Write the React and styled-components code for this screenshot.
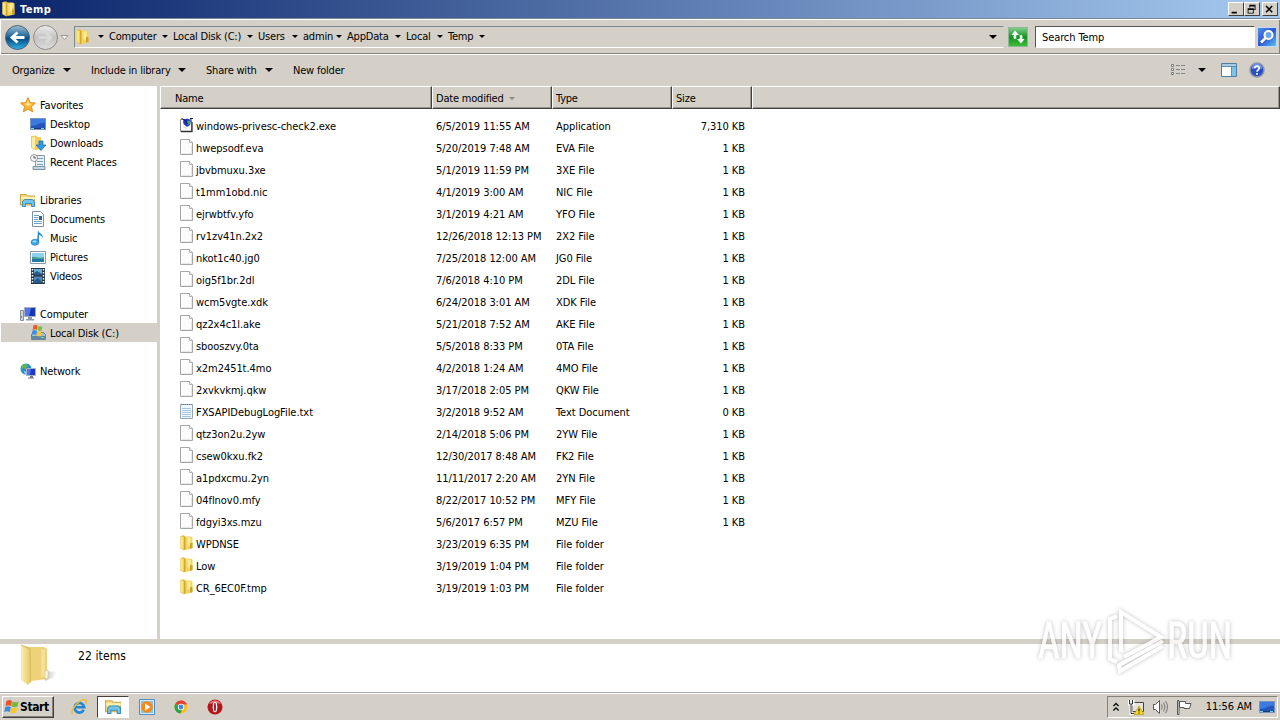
import styled, { createGlobalStyle } from 'styled-components'

const files = [
  ['exe', 'windows-privesc-check2.exe', '6/5/2019 11:55 AM', 'Application', '7,310 KB'],
  ['file', 'hwepsodf.eva', '5/20/2019 7:48 AM', 'EVA File', '1 KB'],
  ['file', 'jbvbmuxu.3xe', '5/1/2019 11:59 PM', '3XE File', '1 KB'],
  ['file', 't1mm1obd.nic', '4/1/2019 3:00 AM', 'NIC File', '1 KB'],
  ['file', 'ejrwbtfv.yfo', '3/1/2019 4:21 AM', 'YFO File', '1 KB'],
  ['file', 'rv1zv41n.2x2', '12/26/2018 12:13 PM', '2X2 File', '1 KB'],
  ['file', 'nkot1c40.jg0', '7/25/2018 12:00 AM', 'JG0 File', '1 KB'],
  ['file', 'oig5f1br.2dl', '7/6/2018 4:10 PM', '2DL File', '1 KB'],
  ['file', 'wcm5vgte.xdk', '6/24/2018 3:01 AM', 'XDK File', '1 KB'],
  ['file', 'qz2x4c1l.ake', '5/21/2018 7:52 AM', 'AKE File', '1 KB'],
  ['file', 'sbooszvy.0ta', '5/5/2018 8:33 PM', '0TA File', '1 KB'],
  ['file', 'x2m2451t.4mo', '4/2/2018 1:24 AM', '4MO File', '1 KB'],
  ['file', '2xvkvkmj.qkw', '3/17/2018 2:05 PM', 'QKW File', '1 KB'],
  ['txt', 'FXSAPIDebugLogFile.txt', '3/2/2018 9:52 AM', 'Text Document', '0 KB'],
  ['file', 'qtz3on2u.2yw', '2/14/2018 5:06 PM', '2YW File', '1 KB'],
  ['file', 'csew0kxu.fk2', '12/30/2017 8:48 AM', 'FK2 File', '1 KB'],
  ['file', 'a1pdxcmu.2yn', '11/11/2017 2:20 AM', '2YN File', '1 KB'],
  ['file', '04flnov0.mfy', '8/22/2017 10:52 PM', 'MFY File', '1 KB'],
  ['file', 'fdgyi3xs.mzu', '5/6/2017 6:57 PM', 'MZU File', '1 KB'],
  ['folder', 'WPDNSE', '3/23/2019 6:35 PM', 'File folder', ''],
  ['folder', 'Low', '3/19/2019 1:04 PM', 'File folder', ''],
  ['folder', 'CR_6EC0F.tmp', '3/19/2019 1:03 PM', 'File folder', ''],
]

const groups = [
  ['star', 'Favorites', [['desktop', 'Desktop'], ['downloads', 'Downloads'], ['recent', 'Recent Places']]],
  ['library', 'Libraries', [['document', 'Documents'], ['music', 'Music'], ['picture', 'Pictures'], ['video', 'Videos']]],
  ['computer', 'Computer', [['disk', 'Local Disk (C:)']]],
  ['network', 'Network', []],
]

// name and the width its segment takes up to the next one
const crumbs = [
  ['Computer', 64],
  ['Local Disk (C:)', 85],
  ['Users', 45],
  ['admin', 44],
  ['AppData', 59],
  ['Local', 42],
  ['Temp', 42],
]

const icons = {
  folder: (
    <>
      <path d="M1.500 1 5 .3 7 2v12l-1.500 1.500-4-2z" fill="#e3bd3c" />
      <path d="M6 1.500h6l1.500 1v11l-7 1.500z" fill="#f0d565" />
      <path d="M1.500 1.500 4.500 2v12l-3-1z" fill="#f8e57e" />
      <path d="M8.500 2.500h3v8h-3z" fill="#faec96" />
      <path d="M11 8h2.500v5l-2.500.7z" fill="#cfa22e" />
      <path d="M5.800 2v12.500" stroke="#caa02e" />
    </>
  ),
  file: (
    <>
      <path d="M1.500.5h9l3 3v12h-12z" fill="#fcfcfc" stroke="#a6a6a6" />
      <path d="M10.500.5v3h3" fill="#eee" stroke="#b4b4b4" />
      <path d="M3 14.500h9.500V6" fill="none" stroke="#e8e8e8" />
    </>
  ),
  txt: (
    <>
      <path d="M1.500 1.500h12v14h-12z" fill="#eef7fd" stroke="#95a4b0" />
      <path d="M3 5.500h9M3 7.500h9M3 9.500h9M3 11.500h9M3 13.500h9" stroke="#a7c8e0" />
      <path d="M2 1.500h11" stroke="#777" strokeDasharray="1 1" />
    </>
  ),
  exe: (
    <>
      <path d="M1.500 2.500h11v12h-11z" fill="#fff" stroke="#8a8a8a" />
      <path d="M2 14.500h11V5" fill="none" stroke="#333" strokeWidth="1.300" />
      <path d="M4 3.500l4-2 4 2-1 4.500-3 2-3.500-3z" fill="#1b35c9" />
      <path d="M8 4l3-.5v3l-2.500 2z" fill="#46a845" />
      <path d="M2.500 1.500l3.500 1.500 2.500 4M11 1.500h3" stroke="#0a1470" fill="none" />
      <path d="M4 9.500l4 2" stroke="#cfd4f2" />
    </>
  ),
  star: (
    <>
      <path d="M8 .7l2.100 4.900 5.300.5-4 3.500 1.200 5.200L8 12.100l-4.600 2.700 1.200-5.200-4-3.500 5.300-.5z" fill="#fbb734" stroke="#e58a20" />
      <path d="M8 3l1.300 3.500 3.200.3L8 9l-4-2.200 2.700-.3z" fill="#ffe58a" />
    </>
  ),
  desktop: (
    <>
      <path d="M.5 2.500h15v11H.5z" fill="#2455b8" stroke="#7892b8" />
      <path d="M1 3h14v4C10 6 7 10 1 10z" fill="#3b7ae0" />
      <path d="M1 12.500h14" stroke="#193b75" />
      <path d="M1 12.500h3M11 12.500h3" stroke="#79cdf0" />
    </>
  ),
  downloads: (
    <>
      <path d="M1 1l5-.5L8 2h3v12l-6 1-4-2z" fill="#edcf69" />
      <path d="M2 2l3 .5v11L2 13z" fill="#fcee9c" />
      <path d="M9 6h4v4h3l-5 5.500L6 10h3z" fill="#2f9be2" stroke="#1464a6" strokeWidth=".7" />
    </>
  ),
  recent: (
    <>
      <path d="M5.500 1.500h9v11h-9z" fill="#e6eef4" stroke="#8799aa" />
      <path d="M7 4.500h6M7 7.500h6M7 10.500h6" stroke="#7aa6c6" />
      <path d="M3 12.500h12v3H3z" fill="#c5d6e2" stroke="#7e95a5" />
      <circle cx="4" cy="4" r="3.500" fill="#f4f4f4" stroke="#999" />
      <path d="M4 2v2h2" stroke="#555" fill="none" />
    </>
  ),
  library: (
    <>
      <path d="M.5 2.500h6l1 1.500h7v9H.5z" fill="#f6dd78" stroke="#c9a648" />
      <path d="M1 5h14v2H1z" fill="#fff3b6" />
      <path d="M2.500 14.500v-5l2-2h8l2 2v5h-3v-3h-6v3z" fill="#72c4ec" stroke="#3c8dbd" />
    </>
  ),
  document: (
    <>
      <path d="M2.500.5h8l3 3v12h-11z" fill="#fff" stroke="#7d90a6" />
      <path d="M4 4.500h5M4 6.500h4M4 8.500h4M4 10.500h8M4 12.500h8" stroke="#6ba2cf" />
      <path d="M9 5h3v4H9z" fill="#325f97" />
    </>
  ),
  music: (
    <>
      <path d="M8 0c1 4 5 3 5 8-1-2-3-3-4-3v7H7z" fill="#2c8ed3" />
      <ellipse cx="5" cy="12.300" rx="4" ry="3" fill="#3ba6e6" stroke="#1d6fb4" strokeWidth=".6" />
      <ellipse cx="4.500" cy="11.500" rx="2" ry="1" fill="#9fdcfa" />
    </>
  ),
  picture: (
    <>
      <path d="M.5 2.500h15v12H.5z" fill="#fff" stroke="#8b98a4" />
      <path d="M2 4h12v9H2z" fill="#8ed0ef" />
      <path d="M2 8c4-1 6 2 12 0v2H2z" fill="#44a28c" />
      <path d="M2 10h12v3H2z" fill="#2478a8" />
    </>
  ),
  video: (
    <>
      <path d="M1 0h14v16H1z" fill="#263746" />
      <path d="M4 1h8v6H4z" fill="#6cabd4" />
      <path d="M4 8.500h8V15H4z" fill="#4d88bf" />
      <path d="M4 5l3-2 5 3v1H4zM4 13l4-3 4 4v1H4z" fill="#275b8c" />
      <path d="M2.500 1v14M13.500 1v14" stroke="#fff" strokeWidth="1.500" strokeDasharray="1.500 1.500" />
    </>
  ),
  computer: (
    <>
      <path d="M.5 4.500h3v10h-3z" fill="#c9d3d9" stroke="#87939b" />
      <path d="M1.500 10v2" stroke="#54b948" />
      <path d="M4.500 1.500h11v9h-11z" fill="#1c35b4" stroke="#a6afbd" />
      <path d="M5 2h6l-2 8H5z" fill="#5375e6" />
      <path d="M8 11h4v2h2v1.500H6V13h2z" fill="#8e9aab" />
    </>
  ),
  disk: (
    <>
      <path d="M1.500 9.500l2-2h10l2 2v5h-14z" fill="#a4c0cf" stroke="#688494" />
      <path d="M2 11h13v3H2z" fill="#5b8ba6" />
      <path d="M11 12.500h3" stroke="#7fe066" />
      <path d="M3.500.5c1.500-1 3-1 4 0L7 5c-1.500-1-3-1-4.500 0z" fill="#ea5a2b" />
      <path d="M8.300 1c1.500.8 3 .8 4.200 0L11.700 5.500c-1.200.6-2.500.6-4 0z" fill="#7fbe3e" />
      <path d="M2.300 5.700c1.500-1 3-1 4.500 0L6.200 10c-1.500-1-3-1-4.500 0z" fill="#3f8fe0" />
      <path d="M7.500 6.200c1.500.8 3 .8 4 0L10.800 11c-1.300.5-2.500.3-4-.3z" fill="#fbc62f" />
    </>
  ),
  network: (
    <>
      <circle cx="6" cy="6" r="5.500" fill="#2d8fc9" />
      <path d="M2 2c3-2 5-1 6 1L5 6 3 5 1 7z" fill="#58b65d" />
      <path d="M4 8l3 1v2.500C5 11 4 10 4 8z" fill="#8fdde2" />
      <path d="M6.500 5.500h9v7h-9z" fill="#1e38c0" stroke="#a6b4c9" />
      <path d="M7 6h4l-1 6H7z" fill="#5173ec" />
      <path d="M10 13h3v1.500h1v1H8v-1h2z" fill="#778" />
    </>
  ),
  windows: (
    <>
      <path d="M2.500 2C5 .5 6.500.8 8 2L7 7C5 6 4 6 1.500 7z" fill="#e8532a" />
      <path d="M8.700 2.500c2 1 4 1 6 0L13.500 7.500c-2 1-4 1-6 0z" fill="#7ab83c" />
      <path d="M1.300 8c2-1.200 4-1 5.500 0L5.800 13c-2-1.200-3.500-1-5.500 0z" fill="#3c8bdc" />
      <path d="M7.300 8.500c2 1 4 1 6 0l-1 5c-2 1-4 1-6 0z" fill="#fbc52c" />
    </>
  ),
  ie: (
    <>
      <path d="M12.800 10.800A4.800 4.800 0 1 1 13.200 8.300H4" fill="none" stroke="#2386d2" strokeWidth="2.600" />
      <path d="M1.500 15C-1 12 8-.5 14.500 1c1.300.6.8 2.500.3 3.800" fill="none" stroke="#eebc35" strokeWidth="1.500" />
    </>
  ),
  player: (
    <>
      <path d="M.5.5h15v15H.5z" fill="#d8eaf7" stroke="#4e8fc4" />
      <path d="M2 2h12v12H2z" fill="#8dbfe3" />
      <circle cx="8" cy="8" r="5.800" fill="#f58a1b" />
      <path d="M6 4.500l5.500 3.500L6 11.500z" fill="#fff" />
    </>
  ),
  chrome: (
    <>
      <circle cx="8" cy="8" r="6.500" fill="#fbc116" />
      <path d="M8 8 2.300 4.800A6.500 6.500 0 0 1 14 5.500H8z" fill="#e34133" />
      <path d="M8 8 2.300 4.800A6.500 6.500 0 0 0 7.300 14.500L10 9.500z" fill="#2da14c" />
      <circle cx="8" cy="8" r="3.200" fill="#fff" />
      <circle cx="8" cy="8" r="2.400" fill="#4483e8" />
    </>
  ),
  opera: (
    <>
      <circle cx="8" cy="8" r="7.500" fill="#b7151b" />
      <path d="M2 5C4 0 12 0 14 5c-3-1-8-1-12 0z" fill="#e1696b" />
      <ellipse cx="8" cy="8" rx="2.300" ry="5.300" fill="#fff" />
      <ellipse cx="8" cy="8" rx=".9" ry="4.500" fill="#8c0d12" />
    </>
  ),
  help: (
    <>
      <circle cx="8" cy="8" r="7" fill="#2a4fc0" stroke="#8d97aa" strokeWidth="1.500" />
      <path d="M2.500 7a5.500 5.500 0 0 1 11 0c-4-1-7-1-11 0z" fill="#6f8fe4" />
      <path d="M5.700 6.300c0-3 4.700-2.800 4.500 0C10.200 8 8 7.800 8 9.800M8 11v1.700" fill="none" stroke="#fff" strokeWidth="1.700" />
    </>
  ),
  views: (
    <>
      <path d="M1.500 2.500h2v2h-2zM1.500 6.500h2v2h-2zM1.500 10.500h2v2h-2z" fill="#fff" stroke="#777d85" />
      <path d="M6 3.500h4M11 3.500h4M6 7.500h4M11 7.500h4M6 11.500h4M11 11.500h4" stroke="#7d8790" />
    </>
  ),
  preview: (
    <>
      <path d="M.5 1.500h15v13H.5z" fill="#fff" stroke="#4e7ea3" />
      <path d="M1 2h14v2H1z" fill="#a8cce4" />
      <path d="M11 4h4v10h-4z" fill="#7cc4e4" />
      <path d="M10.500 4v10M1 4.500h14" stroke="#5a90b4" />
    </>
  ),
  refresh: (
    <path d="M4 10Q3 7.500 4 6H1.500L5 1.500 9 6H6.500Q5.800 8 6.500 9.500zM12 6q1 2.500 0 4h2.500L11 14.500 7 10h2.500q.7-2 0-3.500z" fill="#fff" />
  ),
  search: (
    <>
      <circle cx="9.500" cy="6" r="4" fill="#6aa4ee" stroke="#fff" strokeWidth="2" />
      <path d="M6.500 9L2 13.500" stroke="#fff" strokeWidth="2.500" />
    </>
  ),
  minimize: <path d="M3 10h6v2H3z" />,
  restore: <path d="M5 2h7v6h-2v-1h1V4H6v1H5zM3 6h7v6H3zM4 8v3h5V8z" fillRule="evenodd" />,
  close: <path d="M3.500 3.500l7 7M10.500 3.500l-7 7" stroke="#000" strokeWidth="1.800" />,
  chevrons: <path d="M5 7l3-3 3 3M5 12l3-3 3 3" fill="none" stroke="#000" strokeWidth="1.500" />,
  lan: (
    <>
      <path d="M4.500 3.500h11v9h-11z" fill="#e6e4da" stroke="#444" />
      <path d="M1 1v4h4V1M3 5v10h3" fill="none" stroke="#fff" strokeWidth="3" />
      <path d="M1.500 1v4h3V1M3 5v9.500h3" fill="none" stroke="#333" />
      <path d="M11 7l5 8.500H6z" fill="#fbdc1c" stroke="#a68a12" strokeWidth=".6" />
      <path d="M11 9.500v3M11 13.500v1" stroke="#222" strokeWidth="1.300" />
    </>
  ),
  sound: (
    <>
      <path d="M1.500 5.500h2l4-4v13l-4-4h-2z" fill="#fff" stroke="#555" />
      <path d="M9.500 5.500q1.500 2.500 0 5M11.500 3.500q3 4.500 0 9M13.500 2q4 6 0 12" fill="none" stroke="#777" />
    </>
  ),
  flag: (
    <>
      <path d="M1.500 1.500h1.500v14H1.500z" fill="#fff" stroke="#555" />
      <path d="M3.500 2.500h6v2h5.500l-1.500 5H8v-1H3.500z" fill="#fff" stroke="#555" />
    </>
  ),
}

function Icon({ name, size = 16 }) {
  return (
    <Glyph width={size} height={size} viewBox="0 0 16 16">
      {icons[name]}
    </Glyph>
  )
}

export default function App() {
  return (
    <Window>
      <GlobalStyle />
      <TitleBar>
        <Icon name="folder" />
        <Title>Temp</Title>
        <CaptionButton><Icon name="minimize" size={14} /></CaptionButton>
        <CaptionButton $gap><Icon name="restore" size={14} /></CaptionButton>
        <CaptionButton><Icon name="close" size={14} /></CaptionButton>
      </TitleBar>
      <NavBar>
        <NavButtons />
        <AddressBar>
          <Icon name="folder" />
          <Crumbs>
            <Arrow />
            {crumbs.map(([name, width]) => (
              <Crumb key={name} $width={width}>
                {name}
                <Arrow />
              </Crumb>
            ))}
          </Crumbs>
          <Arrow $size={4} />
        </AddressBar>
        <Refresh><Icon name="refresh" /></Refresh>
        <SearchBox>Search Temp</SearchBox>
        <SearchButton><Icon name="search" /></SearchButton>
      </NavBar>
      <Toolbar>
        <Command $width={79}>Organize <Arrow $size={4} /></Command>
        <Command $width={115}>Include in library <Arrow $size={4} /></Command>
        <Command $width={87}>Share with <Arrow $size={4} /></Command>
        <Command>New folder</Command>
        <ToolIcons>
          <ViewMenu>
            <Icon name="views" />
            <Arrow $size={4} />
          </ViewMenu>
          <Icon name="preview" />
          <Icon name="help" />
        </ToolIcons>
      </Toolbar>
      <Body>
        <Sidebar>
          {groups.map(([icon, label, items]) => (
            <Group key={label}>
              <TreeItem><Icon name={icon} />{label}</TreeItem>
              {items.map(([itemIcon, item]) => (
                <TreeItem key={item} $child $selected={itemIcon === 'disk'}>
                  <Icon name={itemIcon} />
                  {item}
                </TreeItem>
              ))}
            </Group>
          ))}
        </Sidebar>
        <Content>
          <HeaderRow>
            <HeaderCell $pad={14}>Name</HeaderCell>
            <HeaderCell>Date modified <Arrow $color="#8c8880" /></HeaderCell>
            <HeaderCell>Type</HeaderCell>
            <HeaderCell>Size</HeaderCell>
            <HeaderCell />
          </HeaderRow>
          <List>
            {files.map(([icon, name, date, type, size]) => (
              <FileRow key={name}>
                <NameCell><Icon name={icon} />{name}</NameCell>
                <Cell>{date}</Cell>
                <Cell>{type}</Cell>
                <SizeCell>{size}</SizeCell>
              </FileRow>
            ))}
          </List>
        </Content>
      </Body>
      <Details>
        <BigFolder />
        <span>22 items</span>
      </Details>
      <Taskbar>
        <StartButton><Icon name="windows" />Start</StartButton>
        <Task><Icon name="ie" /></Task>
        <Task $active><Icon name="library" size={17} /></Task>
        <Task><Icon name="player" /></Task>
        <Task><Icon name="chrome" /></Task>
        <Task><Icon name="opera" /></Task>
        <Tray>
          <Icon name="chevrons" size={14} />
          <Icon name="lan" />
          <Icon name="sound" />
          <Icon name="flag" />
          <Clock>11:56 AM</Clock>
          <Icon name="desktop" />
        </Tray>
      </Taskbar>
      <Watermark />
    </Window>
  )
}

function NavButtons() {
  return (
    <Glyph width="72" height="32" viewBox="2 0 72 32">
      <defs>
        <linearGradient id="back" x2="0" y2="1">
          <stop stopColor="#a3bfd2" />
          <stop offset=".45" stopColor="#20689c" />
          <stop offset=".55" stopColor="#0a4c83" />
          <stop offset="1" stopColor="#2fb4e6" />
        </linearGradient>
        <linearGradient id="forward" x2="0" y2="1">
          <stop stopColor="#eeeeec" />
          <stop offset=".5" stopColor="#c3c2c0" />
          <stop offset="1" stopColor="#dededc" />
        </linearGradient>
      </defs>
      <circle cx="17.500" cy="16.500" r="12" fill="url(#back)" stroke="#4e6578" />
      <path d="M24.500 16.500H12M17.500 11.500l-5.500 5 5.500 5" fill="none" stroke="#fff" strokeWidth="2.800" />
      <circle cx="45.500" cy="16.500" r="12" fill="url(#forward)" stroke="#8c8c8c" />
      <path d="M38.500 16.500h12.500M45.500 11.500l5.500 5-5.500 5" fill="none" stroke="#d9d9d7" strokeWidth="2.500" />
      <path d="M61 14.500h7l-3.500 4z" fill="#fff" stroke="#999" />
    </Glyph>
  )
}

function BigFolder() {
  return (
    <Glyph width="40" height="44" viewBox="0 0 40 44">
      <defs>
        <linearGradient id="flap">
          <stop stopColor="#fbeeb0" />
          <stop offset="1" stopColor="#e5c766" />
        </linearGradient>
        <linearGradient id="shade">
          <stop stopColor="#c4c4c4" />
          <stop offset="1" stopColor="#fff" />
        </linearGradient>
      </defs>
      <path d="M25 27l12 1-3 5-9 4z" fill="url(#shade)" />
      <path d="M10 3h14l3 2v30l-16 2z" fill="#edd27a" />
      <path d="M21 5h4v28h-4z" fill="#f4e09a" />
      <path d="M1 1l9 2 1 3v32l-3 3-7-5z" fill="url(#flap)" />
      <path d="M1 1l9 4 .5 33" fill="none" stroke="#d8b95c" />
      <path d="M25 27l3-1v8l-3 1z" fill="#fff8dc" stroke="#c9b77c" strokeWidth=".5" />
    </Glyph>
  )
}

function Watermark() {
  return (
    <Mark width="246" height="72" viewBox="0 0 246 72">
      <g fill="#fff" stroke="#fff" strokeWidth=".8" fontFamily="Roboto, sans-serif" fontSize="50">
        <text x="6" y="54" textLength="64" lengthAdjust="spacingAndGlyphs">ANY</text>
        <text x="135" y="54" textLength="65" lengthAdjust="spacingAndGlyphs">RUN</text>
      </g>
      <g fill="none" stroke="#fff" strokeWidth="4">
        <path d="M85 12l-7 3v40l7 3" />
        <path d="M89 48V8l40 25-37 20" />
        <path d="M131 37L87 61l1 6 43-25" />
      </g>
    </Mark>
  )
}

const GlobalStyle = createGlobalStyle`
  body {
    margin: 0;
    overflow: hidden;
  }
`

const Window = styled.main`
  position: relative;
  display: flex;
  flex-direction: column;
  width: 1280px;
  height: 720px;
  background: #d4d0c8;
  color: #000;
  font: 11px 'DejaVu Sans Condensed', 'DejaVu Sans', sans-serif;
  font-stretch: condensed;
  letter-spacing: -0.2px;
  white-space: nowrap;
`

const Glyph = styled.svg`
  display: block;
  flex: none;
`

const Arrow = styled.i`
  display: inline-block;
  flex: none;
  border: ${({ $size = 3 }) => $size}px solid transparent;
  border-top-color: ${({ $color = '#000' }) => $color};
  border-bottom: 0;
`

const TitleBar = styled.header`
  display: flex;
  align-items: center;
  box-sizing: border-box;
  height: 18px;
  padding: 0 2px 0 1px;
  background: linear-gradient(90deg, #0a246a, #a6caf0);
`

const Title = styled.h1`
  flex: 1;
  margin: 0 0 0 3px;
  color: #fff;
  font-size: 11px;
  letter-spacing: 0.5px;
`

const CaptionButton = styled.button`
  display: grid;
  place-items: center;
  box-sizing: border-box;
  width: 16px;
  height: 14px;
  margin-right: ${({ $gap }) => ($gap ? 2 : 0)}px;
  padding: 0;
  border: 1px solid;
  border-color: #fff #404040 #404040 #fff;
  background: #d4d0c8;
`

const NavBar = styled.nav`
  display: flex;
  align-items: center;
  box-sizing: border-box;
  height: 37px;
  padding: 2px 3px 1px 2px;
  border-top: 1px solid #7d8791;
  border-bottom: 1px solid #fff;
  box-shadow: inset 1px 1px #fff, inset -1px -1px #858178;
`

const AddressBar = styled.div`
  display: flex;
  align-items: center;
  box-sizing: border-box;
  width: 930px;
  height: 22px;
  padding-right: 6px;
  border: 1px solid;
  border-color: #7b8a8e #d4d0c8 #fff #7b8a8e;
`

const Crumbs = styled.div`
  display: flex;
  flex: 1;
  align-items: center;
  padding: 0 0 2px 7px;
`

const Crumb = styled.span`
  display: flex;
  justify-content: space-between;
  align-items: center;
  box-sizing: border-box;
  width: ${({ $width }) => $width}px;
  padding-left: 5px;
`

const Refresh = styled.button`
  display: grid;
  place-items: center;
  box-sizing: border-box;
  flex: none;
  width: 20px;
  height: 20px;
  margin-left: 4px;
  padding: 0;
  border: 1px solid #8fb894;
  background: linear-gradient(#7fce86, #149226 50%, #3cbd35);
`

const SearchBox = styled.div`
  display: flex;
  align-items: center;
  box-sizing: border-box;
  flex: 1;
  height: 22px;
  margin-left: 7px;
  padding-left: 6px;
  border: 1px solid;
  border-color: #555 #fff #fff #555;
  background: #fff;
  letter-spacing: -0.1px;
`

const SearchButton = styled(Refresh)`
  margin-left: 2px;
  border-color: #c3d8f2;
  background: linear-gradient(135deg, #4b8ee8, #2f55d4 50%, #55c5f0);
`

const Toolbar = styled.div`
  display: flex;
  align-items: center;
  height: 30px;
  padding: 0 15px 1px 12px;
`

const Command = styled.span`
  display: flex;
  justify-content: space-between;
  align-items: center;
  box-sizing: border-box;
  width: ${({ $width }) => ($width ? `${$width}px` : 'auto')};
  padding-right: ${({ $width }) => ($width ? 20 : 0)}px;
`

const ToolIcons = styled.div`
  display: flex;
  flex: 1;
  justify-content: flex-end;
  align-items: center;
  gap: 12px;
`

const ViewMenu = styled.div`
  display: flex;
  align-items: center;
  gap: 12px;
  margin-right: 3px;
`

const Body = styled.section`
  display: flex;
  height: 553px;
`

const Sidebar = styled.aside`
  box-sizing: border-box;
  width: 157px;
  padding-top: 9px;
  background: #fff;
  letter-spacing: -0.15px;
`

const Group = styled.div`
  margin-bottom: 19px;
`

const TreeItem = styled.div`
  display: flex;
  align-items: center;
  gap: 4px;
  height: 18px;
  margin-left: 1px;
  padding: 1px 0 0 ${({ $child }) => ($child ? 29 : 19)}px;
  /* the selected row runs on over the splitter */
  margin-right: ${({ $selected }) => ($selected ? -3 : 0)}px;
  background: ${({ $selected }) => ($selected ? '#d4d0c8' : 'none')};
  line-height: 15px;

  svg {
    margin-bottom: 1px;
  }
`

const Content = styled.div`
  display: flex;
  flex: 1;
  flex-direction: column;
  margin-left: 3px;
`

const HeaderRow = styled.div`
  display: grid;
  grid-template-columns: 272px 120px 120px 80px 1fr;
  height: 23px;
`

const HeaderCell = styled.div`
  display: flex;
  align-items: center;
  gap: 5px;
  padding: 2px 0 0 ${({ $pad = 3 }) => $pad}px;
  border: 1px solid;
  border-color: #fff #404040 #404040 #fff;
  box-shadow: inset -1px -1px #9a968e;
`

const List = styled.div`
  flex: 1;
  padding-top: 6px;
  background: #fff;
  letter-spacing: -0.05px;
`

const FileRow = styled.div`
  display: grid;
  grid-template-columns: 276px 120px 120px 69px;
  align-items: center;
  height: 22px;
`

const Cell = styled.span``

const NameCell = styled(Cell)`
  display: flex;
  align-items: center;
  gap: 1px;
  padding-left: 19px;

  svg {
    margin-bottom: 2px;
  }
`

const SizeCell = styled(Cell)`
  text-align: right;
`

const Details = styled.footer`
  display: flex;
  box-sizing: border-box;
  height: 48px;
  margin-top: 5px;
  padding-left: 20px;
  background: #fff;
  font-size: 12px;
  letter-spacing: 0.1px;

  span {
    margin: 5px 0 0 18px;
  }
`

const Taskbar = styled.footer`
  display: flex;
  align-items: center;
  box-sizing: border-box;
  height: 28px;
  padding: 0 2px 0 2px;
  border-top: 1px solid #a9adab;
  box-shadow: inset 0 1px #fff;
`

const StartButton = styled.button`
  display: flex;
  align-items: center;
  box-sizing: border-box;
  width: 52px;
  height: 22px;
  margin-right: 9px;
  padding: 0 0 0 1px;
  border: 1px solid;
  border-color: #fff #404040 #404040 #fff;
  background: #d4d0c8;
  box-shadow: inset -1px -1px #85817a;
  color: #000;
  font: bold 12px 'DejaVu Sans Condensed', 'DejaVu Sans', sans-serif;
  font-stretch: condensed;
  letter-spacing: -0.4px;
`

const Task = styled.div`
  display: grid;
  place-items: center;
  box-sizing: border-box;
  width: 32px;
  height: 22px;
  margin-right: 2px;
  border: 1px solid;
  border-color: ${({ $active }) => ($active ? '#404040 #fff #fff #404040' : 'transparent')};
  background: ${({ $active }) => ($active ? '#fff' : 'none')};
`

const Tray = styled.div`
  display: flex;
  align-items: center;
  gap: 8px;
  box-sizing: border-box;
  height: 22px;
  margin-left: auto;
  padding: 0 2px 0 0;
  border: 1px solid;
  border-color: #858178 #fff #fff #858178;

  > :first-child {
    margin: 0 -3px 0 1px;
  }
`

const Clock = styled.time`
  margin: 0 -1px 0 6px;
  letter-spacing: -0.1px;
`

/* floats over the list, the splitter and the details pane */
const Mark = styled.svg`
  position: absolute;
  right: 2px;
  bottom: 44px;
  opacity: 0.8;
  filter: drop-shadow(0 0 2px rgba(0, 0, 0, 0.32));
`
